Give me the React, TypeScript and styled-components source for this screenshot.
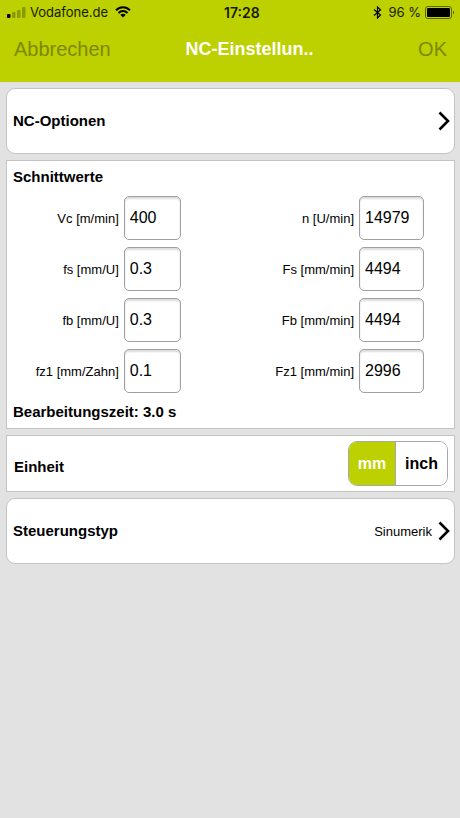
import { useState } from "react";
import styled, { createGlobalStyle } from "styled-components";

const GlobalStyle = createGlobalStyle`
  * { box-sizing: border-box; }
  body {
    margin: 0;
    background: #e2e2e2;
    color: #000;
    font-family: "Liberation Sans", Arial, Helvetica, sans-serif;
    font-size: 15px;
  }
  button, input { font-family: inherit; color: inherit; }
  button { cursor: pointer; }
`;

const Header = styled.header`
  background: #bdd000;
  padding-bottom: 16px;
`;

const StatusBar = styled.div`
  display: grid;
  grid-template-columns: 10fr auto 9fr;
  align-items: center;
  height: 24px;
  padding: 0 5px 0 7px;
  font-family: Inter, "Liberation Sans", sans-serif;
  font-size: 13px;
  color: #171a00;
`;

const StatusGroup = styled.div<{ $end?: boolean }>`
  display: flex;
  align-items: center;
  justify-content: ${({ $end }) => ($end ? "flex-end" : "flex-start")};
  gap: 4px;
  white-space: nowrap;

  svg { display: block; flex: none; }
`;

const Carrier = styled.span`
  margin-right: 3px;
`;

const Charge = styled.span`
  margin-left: 2px;
`;

const Clock = styled.span`
  font-size: 14px;
  font-weight: 600;
`;

const NavBar = styled.div`
  display: grid;
  grid-template-columns: 9fr auto 7fr;
  align-items: center;
  height: 42px;
  padding: 8px 13px 0 14px;
`;

const NavButton = styled.button<{ $end?: boolean }>`
  justify-self: ${({ $end }) => ($end ? "end" : "start")};
  padding: 0;
  border: 0;
  background: none;
  font-size: 20px;
  line-height: 24px;
  color: #7d8800;
`;

const Title = styled.h1`
  margin: 0;
  font-size: 18px;
  line-height: 24px;
  color: #fff;
`;

const Content = styled.main`
  display: flex;
  flex-direction: column;
  gap: 6px;
  padding: 6px 5px 6px 6px;
`;

const LinkCard = styled.button`
  display: flex;
  align-items: center;
  width: 100%;
  height: 66px;
  padding: 0 4px 0 6px;
  border: 1px solid #c4c4c4;
  border-radius: 9px;
  background: #fff;
  text-align: left;

  svg { display: block; flex: none; }
`;

const CardLabel = styled.span`
  flex: 1;
  font-size: 15px;
  line-height: 20px;
  font-weight: bold;
`;

const CardValue = styled.span`
  margin-right: 6px;
  padding-top: 2px;
  font-size: 13px;
  line-height: 20px;
`;

const Panel = styled.section`
  border: 1px solid #c4c4c4;
  background: #fff;
`;

const PanelText = styled.h2`
  margin: 0;
  padding: 6px;
  font-size: 15px;
  line-height: 20px;
`;

const FieldGrid = styled.div`
  display: grid;
  grid-template-columns: 5fr 7fr;
  row-gap: 7px;
  padding: 3px 30px 3px 0;
`;

const Field = styled.label`
  display: flex;
  align-items: center;
  justify-content: flex-end;
  gap: 5px;
  font-size: 13px;
  line-height: 20px;
  white-space: nowrap;
`;

const FieldName = styled.span`
  padding-top: 2px;
`;

const FieldInput = styled.input<{ $wide?: boolean }>`
  width: ${({ $wide }) => ($wide ? 65 : 57)}px;
  height: 44px;
  padding: 0 5px;
  border: 1px solid #a0a0a0;
  border-radius: 5px;
  background: #fff;
  box-shadow: inset 0 2px 2px #dcdcdc;
  font-size: 16px;
`;

const UnitPanel = styled(Panel)`
  display: flex;
  align-items: center;
  justify-content: space-between;
  height: 57px;
  padding: 0 6px 0 7px;
`;

const UnitTitle = styled.h2`
  margin: 0;
  padding-top: 6px;
  font-size: 15px;
  line-height: 20px;
`;

const Segments = styled.div`
  display: flex;
  height: 45px;
  border: 1px solid #a8a8a8;
  border-radius: 9px;
  overflow: hidden;
`;

const Segment = styled.button<{ $active: boolean }>`
  padding: 0 9px;
  border: 0;
  background: ${({ $active }) => ($active ? "#bdd000" : "#fff")};
  color: ${({ $active }) => ($active ? "#fff" : "#000")};
  font-size: 16px;
  font-weight: bold;

  & + & { border-left: 1px solid #a8a8a8; }
`;

const Signal = () => (
  <svg width="19" height="11" viewBox="0 0 19 11" aria-hidden="true">
    <rect x="0" y="7" width="3.5" height="4" rx="1" fill="#000" />
    <g fill="#8c9a00">
      <rect x="5" y="5" width="3.5" height="6" rx="1" />
      <rect x="10" y="3" width="3.5" height="8" rx="1" />
      <rect x="15" y="0" width="3.5" height="11" rx="1" />
    </g>
  </svg>
);

const Wifi = () => (
  <svg width="16" height="12" viewBox="0 0 16 12" aria-hidden="true">
    <g fill="none" stroke="#000" strokeWidth="2">
      <path d="M1 4.3C5 .2 11 .2 15 4.3" />
      <path d="M3.5 7C6 4.4 10 4.4 12.500 7" />
    </g>
    <path d="M8 11.500 5.300 8.800C6.800 7.400 9.200 7.400 10.700 8.800Z" fill="#000" />
  </svg>
);

const Bluetooth = () => (
  <svg width="9" height="13" viewBox="0 0 9 13" aria-hidden="true">
    <path d="M1 3.500 7.500 9 4.500 12V1L7.500 4 1 9.500" fill="none" stroke="#000" strokeWidth="1.200" />
  </svg>
);

const Battery = () => (
  <svg width="30" height="13" viewBox="0 0 30 13" aria-hidden="true">
    <rect x=".5" y=".5" width="26" height="12" rx="2.500" fill="none" stroke="#5d6600" />
    <rect x="2" y="2" width="23" height="9" rx="1" fill="#000" />
    <path d="M28 4.500C29.500 5 29.500 8 28 8.500Z" fill="#5d6600" />
  </svg>
);

const Chevron = () => (
  <svg width="12" height="20" viewBox="0 0 12 20" aria-hidden="true">
    <path d="M1.500 1.500 10 10 1.500 18.500" fill="none" stroke="#000" strokeWidth="2.600" />
  </svg>
);

const fields = [
  { label: "Vc [m/min]", value: "400" },
  { label: "n [U/min]", value: "14979", wide: true },
  { label: "fs [mm/U]", value: "0.3" },
  { label: "Fs [mm/min]", value: "4494", wide: true },
  { label: "fb [mm/U]", value: "0.3" },
  { label: "Fb [mm/min]", value: "4494", wide: true },
  { label: "fz1 [mm/Zahn]", value: "0.1" },
  { label: "Fz1 [mm/min]", value: "2996", wide: true },
];

const units = ["mm", "inch"];

export default function App() {
  const [unit, setUnit] = useState("mm");

  return (
    <>
      <GlobalStyle />
      <Header>
        <StatusBar>
          <StatusGroup>
            <Signal />
            <Carrier>Vodafone.de</Carrier>
            <Wifi />
          </StatusGroup>
          <Clock>17:28</Clock>
          <StatusGroup $end>
            <Bluetooth />
            <Charge>96 %</Charge>
            <Battery />
          </StatusGroup>
        </StatusBar>
        <NavBar>
          <NavButton type="button">Abbrechen</NavButton>
          <Title>NC-Einstellun..</Title>
          <NavButton type="button" $end>OK</NavButton>
        </NavBar>
      </Header>
      <Content>
        <LinkCard type="button">
          <CardLabel>NC-Optionen</CardLabel>
          <Chevron />
        </LinkCard>
        <Panel>
          <PanelText>Schnittwerte</PanelText>
          <FieldGrid>
            {fields.map(({ label, value, wide }) => (
              <Field key={label}>
                <FieldName>{label}</FieldName>
                <FieldInput $wide={wide} defaultValue={value} inputMode="decimal" />
              </Field>
            ))}
          </FieldGrid>
          <PanelText>Bearbeitungszeit: 3.0 s</PanelText>
        </Panel>
        <UnitPanel>
          <UnitTitle id="unit-title">Einheit</UnitTitle>
          <Segments role="group" aria-labelledby="unit-title">
            {units.map((name) => (
              <Segment
                key={name}
                type="button"
                $active={unit === name}
                aria-pressed={unit === name}
                onClick={() => setUnit(name)}
              >
                {name}
              </Segment>
            ))}
          </Segments>
        </UnitPanel>
        <LinkCard type="button">
          <CardLabel>Steuerungstyp</CardLabel>
          <CardValue>Sinumerik</CardValue>
          <Chevron />
        </LinkCard>
      </Content>
    </>
  );
}
